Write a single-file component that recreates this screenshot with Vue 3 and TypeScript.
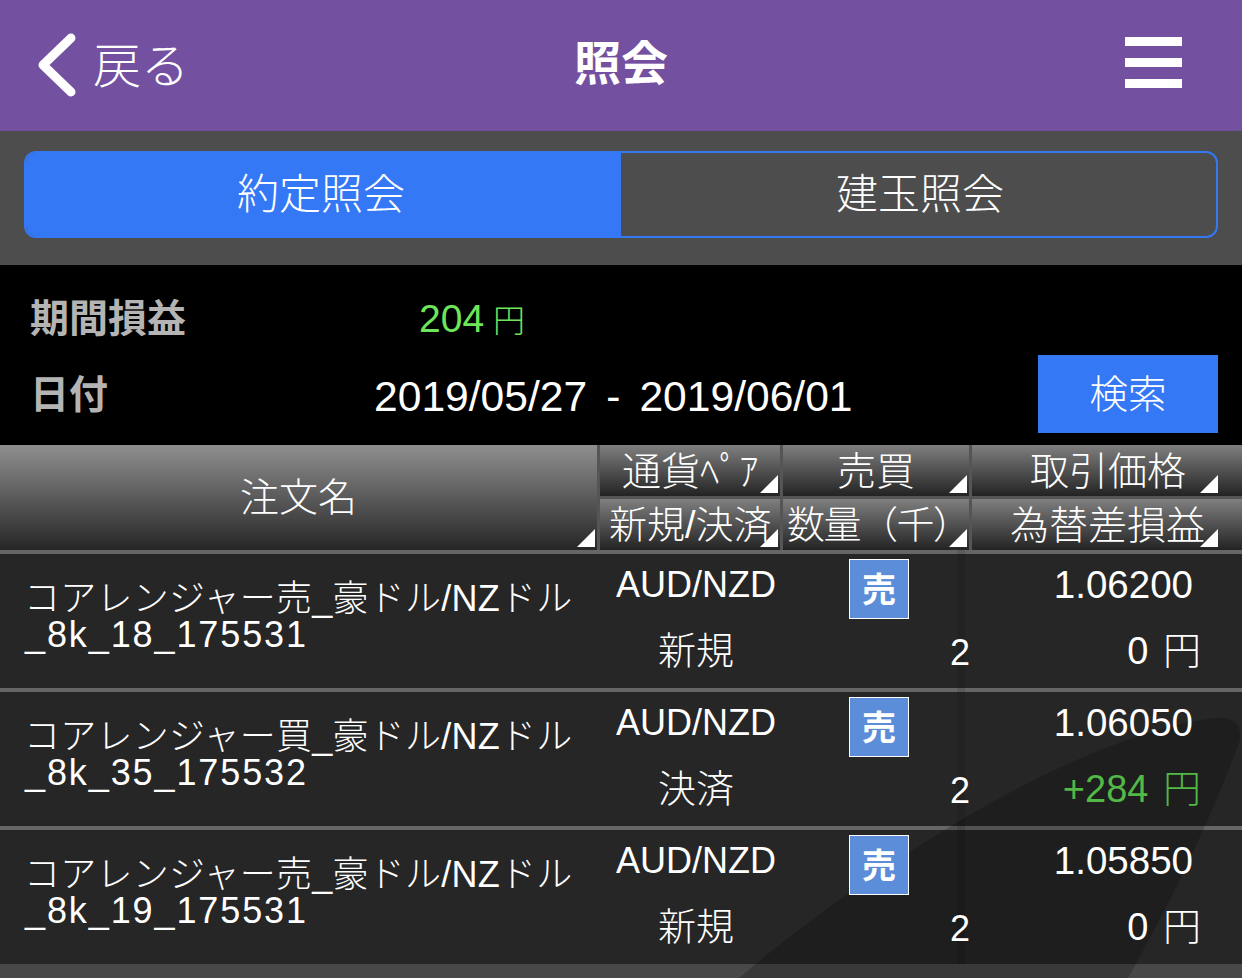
<template>
  <div class="page">
    <header class="topbar">
      <div class="back">
        <svg class="chevron" width="48" height="72" viewBox="0 0 48 72">
          <path d="M33 8 L5 35 L33 62" fill="none" stroke="#fff" stroke-width="9" stroke-linecap="round" stroke-linejoin="round" />
        </svg>
        <span class="back-text">戻る</span>
      </div>
      <h1 class="title">照会</h1>
      <div class="burger"><i></i><i></i><i></i></div>
    </header>

    <div class="tabs-wrap">
      <div class="tabs">
        <div class="tab active">約定照会</div>
        <div class="tab">建玉照会</div>
      </div>
    </div>

    <section class="summary">
      <div class="sum-row first">
        <span class="label">期間損益</span>
        <span class="profit">204<small>円</small></span>
      </div>
      <div class="sum-row second">
        <span class="label date-label">日付</span>
        <span class="dates">2019/05/27<em>-</em>2019/06/01</span>
        <button class="search">検索</button>
      </div>
    </section>

    <div class="list-area">
      <div class="thead">
        <div class="th name sort">注文名</div>
        <div class="th sort pair">通貨ﾍﾟｱ</div>
        <div class="th sort">売買</div>
        <div class="th sort price">取引価格</div>
        <div class="th sort kind">新規/決済</div>
        <div class="th sort qty">数量（千）</div>
        <div class="th sort gain">為替差損益</div>
      </div>

      <div v-for="row in rows" :key="row.id" class="row">
        <div class="order-name">
          <div>{{ row.name }}</div>
          <div class="order-id">{{ row.id }}</div>
        </div>
        <div class="pair-col">
          <div>AUD/NZD</div>
          <div class="kind-val">{{ row.kind }}</div>
        </div>
        <div class="qty-col">
          <div class="badge">売</div>
          <div class="qty-val">2</div>
        </div>
        <div class="price-col">
          <div class="price-val">{{ row.price }}</div>
          <div class="gain-val" :class="{ plus: row.gain.startsWith('+') }">
            {{ row.gain }}<span>円</span>
          </div>
        </div>
      </div>

      <div class="rest"></div>

      <svg class="watermark" width="1242" height="428" viewBox="0 0 1242 428">
        <path d="M739 428 C830 350 1050 190 1215 168 Q1242 165 1240 190 Q1200 300 1128 428 Z" fill="#000" fill-opacity="0.2" />
        <path d="M961 0 V414" stroke="#000" stroke-opacity="0.1" stroke-width="8" />
      </svg>
    </div>
  </div>
</template>

<script setup lang="ts">
interface Row {
  id: string;
  name: string;
  kind: string;
  price: string;
  gain: string;
}

const rows: Row[] = [
  { id: "_8k_18_175531", name: "コアレンジャー売_豪ドル/NZドル", kind: "新規", price: "1.06200", gain: "0 " },
  { id: "_8k_35_175532", name: "コアレンジャー買_豪ドル/NZドル", kind: "決済", price: "1.06050", gain: "+284 " },
  { id: "_8k_19_175531", name: "コアレンジャー売_豪ドル/NZドル", kind: "新規", price: "1.05850", gain: "0 " },
];
</script>

<style scoped>
.page {
  width: 1242px;
  height: 978px;
  overflow: hidden;
  background: #484848;
  color: #fff;
  font-family: "Liberation Sans", "Noto Sans CJK JP", sans-serif;
  font-weight: 300;
}

.topbar {
  height: 131px;
  background: #7350a0;
  display: flex;
  align-items: center;
  justify-content: space-between;
  padding: 0 60px 0 38px;
  box-sizing: border-box;
}

.back {
  width: 300px;
  display: flex;
  align-items: center;
  font-size: 48px;
}

.back-text {
  padding-bottom: 7px;
}

.chevron {
  margin-right: 7px;
}

.title {
  margin: 0 0 0 22px;
  padding-bottom: 4px;
  font-size: 47px;
  font-weight: 700;
  line-height: 1;
}

.burger {
  width: 300px;
  display: flex;
  flex-direction: column;
  align-items: flex-end;
  gap: 11.5px;
  padding-bottom: 6px;
}

.burger i {
  display: block;
  width: 57px;
  height: 9.5px;
  background: #fff;
}

.tabs-wrap {
  height: 134px;
  background: #4d4d4d;
  padding: 20px 24px 0;
  box-sizing: border-box;
}

.tabs {
  height: 87px;
  display: flex;
  border: 2px solid #3478f6;
  border-radius: 12px;
  overflow: hidden;
  box-sizing: border-box;
}

.tab {
  flex: 1;
  display: flex;
  align-items: center;
  justify-content: center;
  font-size: 42px;
  padding: 0 0 9px 3px;
}

.tab.active {
  background: #3478f6;
  flex: 0 0 595px;
  padding: 0 5px 9px 0;
  box-sizing: border-box;
}

.summary {
  height: 180px;
  background: #000;
  padding-top: 25px;
  box-sizing: border-box;
}

.sum-row {
  display: flex;
  align-items: center;
}

.sum-row.first {
  height: 56px;
  margin-bottom: 9px;
  padding-left: 30px;
}

.sum-row.second {
  height: 78px;
  padding: 0 24px 0 30px;
}

.label {
  font-size: 39px;
  font-weight: 700;
  color: #b4b4b4;
  padding-bottom: 6px;
}

.profit {
  margin-left: 233px;
  font-size: 39px;
  color: #6ee65a;
}

.profit small {
  margin-left: 9px;
  font-size: 32px;
}

.date-label {
  width: 344px;
}

.dates {
  flex: 1;
  font-size: 42.6px;
  padding-top: 5px;
}

.dates em {
  font-style: normal;
  margin: 0 19px;
}

.search {
  width: 180px;
  height: 78px;
  border: 0;
  background: #3478f6;
  color: #fff;
  font: inherit;
  font-size: 38.5px;
  padding: 0 0 7px;
}

.list-area {
  position: relative;
}

.thead {
  display: grid;
  grid-template-columns: 597px 180px 186px 1fr;
  grid-template-rows: 51px 51px;
  gap: 3px;
  height: 105px;
  background: #555;
}

.th {
  position: relative;
  display: flex;
  align-items: center;
  justify-content: center;
  font-size: 39px;
  white-space: nowrap;
  background: linear-gradient(#7f7f7f, #232323);
  padding-bottom: 6px;
  box-sizing: border-box;
}

.th.name {
  grid-row: 1 / 3;
  background: linear-gradient(#8f8f8f, #262626);
  padding-bottom: 8px;
}

.sort::after {
  content: "";
  position: absolute;
  right: 2px;
  bottom: 3px;
  width: 18px;
  height: 18px;
  background: #fff;
  clip-path: polygon(100% 0, 100% 100%, 0 100%);
}

.th.price::after,
.th.gain::after {
  right: 24px;
}

.th.pair {
  justify-content: flex-start;
  padding-left: 22px;
}

.th.kind {
  justify-content: flex-start;
  padding-left: 9px;
  font-size: 38px;
}

.th.qty {
  justify-content: flex-start;
  padding-left: 4px;
  font-size: 38px;
  letter-spacing: -1.5px;
}

.th.price {
  justify-content: flex-start;
  padding-left: 58px;
}

.th.gain {
  justify-content: flex-start;
  padding-left: 38px;
}

.row {
  height: 134px;
  border-top: 4px solid #666;
  background: #262626;
  display: flex;
}

.row > div {
  position: relative;
  z-index: 2;
}

.order-name {
  width: 600px;
  flex: none;
  padding: 27px 0 0 24px;
  box-sizing: border-box;
  font-size: 36px;
  line-height: 36px;
  letter-spacing: 0.25px;
  white-space: nowrap;
}

.order-id {
  margin-left: 1px;
  letter-spacing: 1.9px;
}

.pair-col {
  width: 192px;
  flex: none;
  text-align: center;
  font-size: 36px;
  line-height: 66px;
  margin-top: -2px;
}

.kind-val {
  font-size: 38px;
}

.qty-col {
  width: 178px;
  flex: none;
  padding-top: 5px;
}

.badge {
  width: 60px;
  height: 60px;
  margin-left: 57px;
  box-sizing: border-box;
  border: 1.5px solid #fff;
  background: #5b8dd9;
  display: flex;
  align-items: center;
  justify-content: center;
  font-size: 34px;
  font-weight: 700;
  padding-bottom: 4px;
}

.qty-val {
  text-align: right;
  font-size: 36px;
  line-height: 40px;
  margin-top: 14px;
}

.price-col {
  flex: 1;
  text-align: right;
  padding-right: 41px;
  margin-top: -2px;
}

.price-val {
  font-size: 38.5px;
  line-height: 66px;
  padding-right: 8px;
}

.gain-val {
  font-size: 38px;
  line-height: 66px;
  white-space: pre;
}

.gain-val span {
  margin-left: 4px;
}

.gain-val.plus {
  color: #52b846;
}

.rest {
  height: 20px;
}

.watermark {
  position: absolute;
  left: 0;
  top: 105px;
  z-index: 1;
  pointer-events: none;
}
</style>

<style>
body {
  background: #484848;
}
</style>
